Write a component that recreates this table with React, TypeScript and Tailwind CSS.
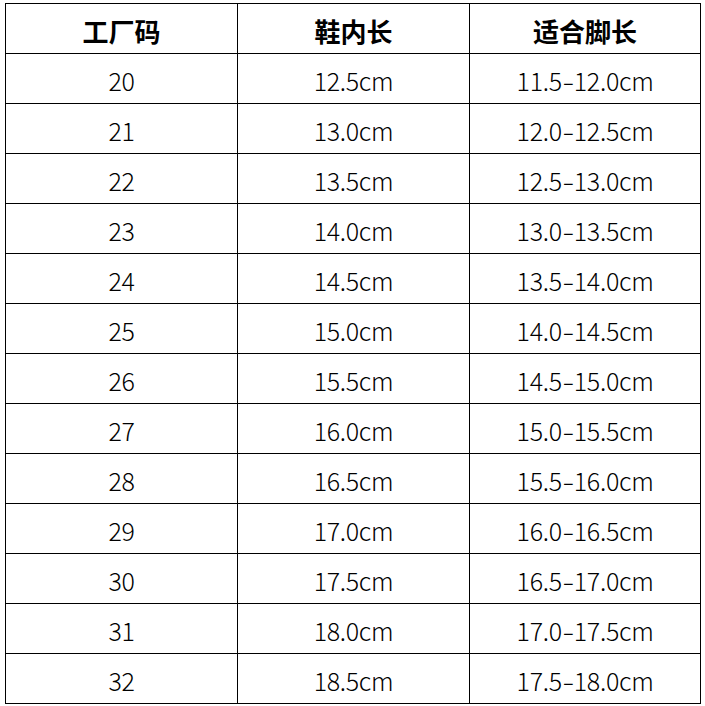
import React from 'react';

const rows: [string, string, string][] = [
  ['20', '12.5cm', '11.5-12.0cm'],
  ['21', '13.0cm', '12.0-12.5cm'],
  ['22', '13.5cm', '12.5-13.0cm'],
  ['23', '14.0cm', '13.0-13.5cm'],
  ['24', '14.5cm', '13.5-14.0cm'],
  ['25', '15.0cm', '14.0-14.5cm'],
  ['26', '15.5cm', '14.5-15.0cm'],
  ['27', '16.0cm', '15.0-15.5cm'],
  ['28', '16.5cm', '15.5-16.0cm'],
  ['29', '17.0cm', '16.0-16.5cm'],
  ['30', '17.5cm', '16.5-17.0cm'],
  ['31', '18.0cm', '17.0-17.5cm'],
  ['32', '18.5cm', '17.5-18.0cm'],
];

const headers = ['工厂码', '鞋内长', '适合脚长'];

const Cell = ({ children, bold }: { children: React.ReactNode; bold?: boolean }) => (
  <div
    className={
      'h-[50px] flex items-center justify-center border-r border-b border-black pt-[4px] ' +
      (bold ? 'text-[26px] font-bold text-black' : 'text-[25px] font-light text-black tracking-[-0.3px]')
    }
  >
    {children}
  </div>
);

export default function App() {
  return (
    <div
      className="w-[705px] h-[706px] bg-white pt-[3px] pl-[5px]"
      style={{ fontFamily: '"Noto Sans CJK SC", "Noto Sans", sans-serif' }}
    >
      <div className="grid grid-cols-[232px_232px_231px] w-[696px] border-l border-t border-black">
        {headers.map(h => (
          <Cell key={h} bold>
            {h}
          </Cell>
        ))}
        {rows.map(r =>
          r.map((v, i) => (
            <Cell key={r[0] + '-' + i}>
              {v.includes('-') ? (
                <>
                  {v.split('-')[0]}
                  <span className="inline-block scale-x-[1.4] px-[2px]">-</span>
                  {v.split('-')[1]}
                </>
              ) : (
                v
              )}
            </Cell>
          ))
        )}
      </div>
    </div>
  );
}
